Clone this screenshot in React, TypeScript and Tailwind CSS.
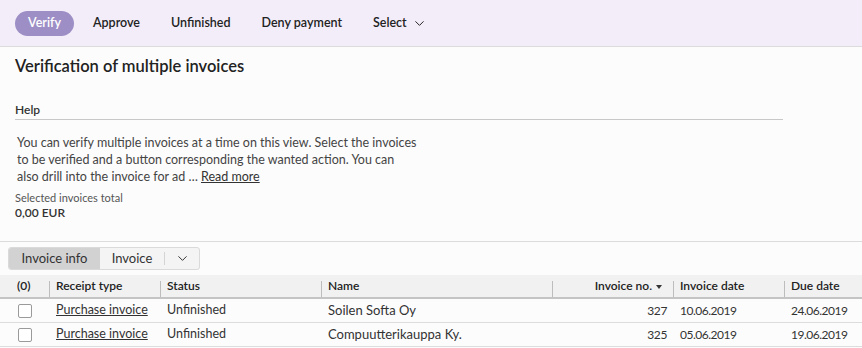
import { ChevronDown } from "lucide-react";

const rows = [
  { no: "327", name: "Soilen Softa Oy", invDate: "10.06.2019", dueDate: "24.06.2019" },
  { no: "325", name: "Compuutterikauppa Ky.", invDate: "05.06.2019", dueDate: "19.06.2019" },
];

const cols = "grid grid-cols-[49px_111px_161px_231px_121px_111px_1fr]";

function HeadCell({ children, first, right }: { children?: React.ReactNode; first?: boolean; right?: boolean }) {
  return (
    <div className={`relative flex items-center ${right ? "justify-end pr-[11px]" : "pl-[7px]"}`}>
      {!first && <span className="absolute bottom-0 left-0 h-[16px] w-px bg-[#bdbdbd]" />}
      {children}
    </div>
  );
}

export default function App() {
  return (
    <div className="h-[348px] w-[862px] overflow-hidden bg-[#fcfcfc] text-[#333] [font-family:Lato,'Noto_Sans',sans-serif]">
      {/* action bar */}
      <div className="flex h-[47px] items-center border-b border-[#dcdcdc] bg-[#f3edf9] pl-[15px] text-[12.5px] font-semibold text-[#222]">
        <button className="h-[25px] w-[59px] rounded-full bg-[#9d8fc6] text-white">Verify</button>
        <div className="ml-[19px] flex items-center gap-[31px]">
          <button>Approve</button>
          <button>Unfinished</button>
          <button>Deny payment</button>
          <button className="flex items-center gap-[5px]">
            Select <ChevronDown size={15} strokeWidth={1.6} />
          </button>
        </div>
      </div>

      {/* header / help */}
      <div className="px-[15px] pt-[8px]">
        <h1 className="text-[16.5px] font-semibold leading-[22px] text-[#222]">Verification of multiple invoices</h1>
        <div className="mt-[25px] w-[768px] border-b border-[#c8c8c8] pb-[1px] text-[12px] font-semibold leading-[16px] text-[#333]">
          Help
        </div>
        <p className="mt-[14px] pl-[2px] text-[12.5px] leading-[17px] text-[#444]">
          You can verify multiple invoices at a time on this view. Select the invoices
          <br />
          to be verified and a button corresponding the wanted action. You can
          <br />
          also drill into the invoice for ad …{" "}
          <a className="text-[#333] underline">Read more</a>
        </p>
        <div className="mt-[6px] text-[11px] leading-[14px] text-[#555]">Selected invoices total</div>
        <div className="text-[12px] font-semibold leading-[16px] text-[#333]">0,00 EUR</div>
      </div>

      <div className="mt-[20px] border-t border-[#dcdcdc] pt-[5px]">
        {/* tabs */}
        <div className="ml-[8px] flex h-[23px] w-[192px] items-stretch overflow-hidden rounded-[3px] border border-[#dadada] bg-[#f4f4f4] text-[13px] text-[#333]">
          <div className="flex w-[91px] items-center justify-center bg-[#d2d2d2]">Invoice info</div>
          <div className="flex w-[64px] items-center justify-center">Invoice</div>
          <div className="my-[4px] w-px bg-[#d4d4d4]" />
          <div className="flex flex-1 items-center justify-center">
            <ChevronDown size={15} strokeWidth={1.6} />
          </div>
        </div>

        {/* table */}
        <div className="mt-[5px]">
          <div className={`${cols} h-[24px] border-b-2 border-[#c4c4c4] bg-[#f1f1f1] text-[12px] font-semibold text-[#222]`}>
            <HeadCell first>
              <span className="pl-[10px]">(0)</span>
            </HeadCell>
            <HeadCell>Receipt type</HeadCell>
            <HeadCell>Status</HeadCell>
            <HeadCell>Name</HeadCell>
            <HeadCell right>
              Invoice no.
              <span className="ml-[4px] mt-[2px] h-0 w-0 border-x-[3px] border-t-[4px] border-x-transparent border-t-[#333]" />
            </HeadCell>
            <HeadCell>Invoice date</HeadCell>
            <HeadCell>Due date</HeadCell>
          </div>
          {rows.map((r) => (
            <div key={r.no} className={`${cols} h-[24px] border-b border-[#dcdcdc] text-[12.5px] text-[#333]`}>
              <div className="flex items-center pl-[18px]">
                <span className="h-[14px] w-[14px] rounded-[2px] border border-[#9a9a9a] bg-white" />
              </div>
              <div className="flex items-center pl-[7px]">
                <a className="underline decoration-[#333]">Purchase invoice</a>
              </div>
              <div className="flex items-center pl-[7px]">Unfinished</div>
              <div className="flex items-center pl-[7px] text-[13px]">{r.name}</div>
              <div className="flex items-center justify-end pr-[6px] text-[12px] tracking-[-0.4px]">{r.no}</div>
              <div className="flex items-center pl-[7px] text-[12px] tracking-[-0.5px]">{r.invDate}</div>
              <div className="flex items-center pl-[7px] text-[12px] tracking-[-0.5px]">{r.dueDate}</div>
            </div>
          ))}
        </div>
      </div>
    </div>
  );
}
